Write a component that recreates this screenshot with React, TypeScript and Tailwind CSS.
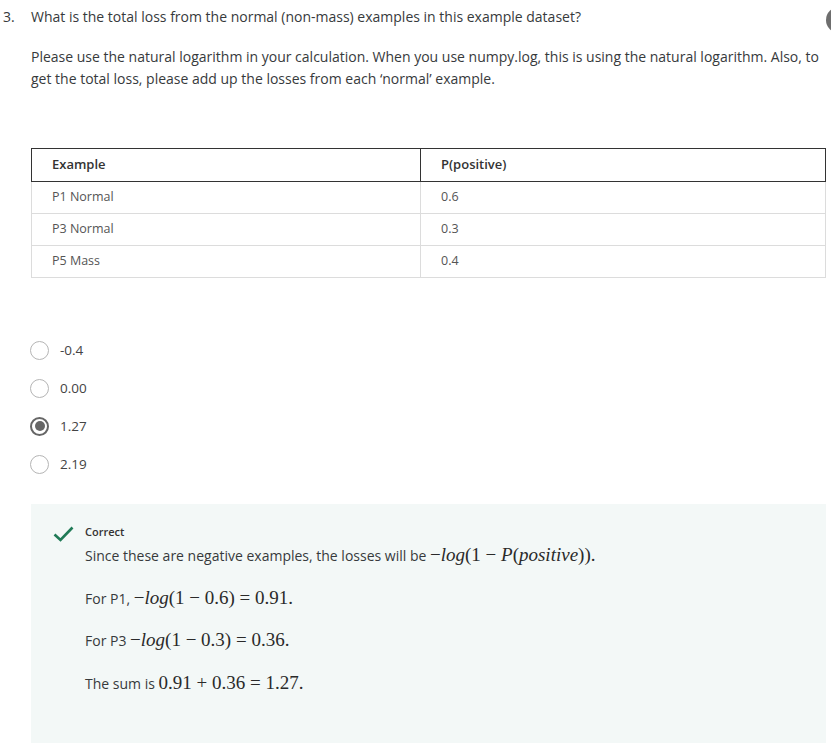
import React from "react";

const M = ({ children }: { children: React.ReactNode }) => (
  <span className="font-['Liberation_Serif',serif] text-[19px] leading-none text-[#2a2a2a]">{children}</span>
);
const I = ({ children }: { children: React.ReactNode }) => <i>{children}</i>;

export default function App() {
  const rows = [
    ["P1 Normal", "0.6"],
    ["P3 Normal", "0.3"],
    ["P5 Mass", "0.4"],
  ];
  const opts = ["-0.4", "0.00", "1.27", "2.19"];
  return (
    <div className="relative w-[831px] h-[743px] overflow-hidden bg-white font-['Open_Sans',sans-serif] text-[#373a3c]">
      <div className="absolute left-[826px] top-[7px] w-[26px] h-[26px] rounded-full bg-[#6e6e6e]" />
      <div className="flex pt-[6px]">
        <div className="w-[31px] pl-[3px] text-[14px] leading-[22px]">3.</div>
        <div className="w-[795px]">
          <p className="text-[14px] leading-[22px]">
            What is the total loss from the normal (non-mass) examples in this example dataset?
          </p>
          <p className="mt-[18px] text-[14px] leading-[22px]">
            Please use the natural logarithm in your calculation. When you use numpy.log, this is using the natural logarithm. Also, to get the total loss, please add up the losses from each ‘normal’ example.
          </p>
          <table className="mt-[58px] w-[795px] border-collapse text-[12.5px]">
            <thead>
              <tr className="h-[33px]">
                <th className="w-[389px] border border-[#333] pl-[20px] text-left font-semibold text-[13px] text-[#333]">Example</th>
                <th className="border border-[#333] pl-[20px] text-left font-semibold text-[13px] text-[#333]">P(positive)</th>
              </tr>
            </thead>
            <tbody>
              {rows.map((r) => (
                <tr key={r[0]} className="h-[32px] text-[#555]">
                  <td className="border border-[#dcdcdc] pl-[20px]">{r[0]}</td>
                  <td className="border border-[#dcdcdc] pl-[20px]">{r[1]}</td>
                </tr>
              ))}
            </tbody>
          </table>
          <div className="mt-[63px] flex flex-col gap-[20px] -ml-[1px]">
            {opts.map((o, i) => (
              <div key={o} className="flex items-center h-[18px]">
                {i === 2 ? (
                  <div className="w-[19px] h-[19px] rounded-full border-[2px] border-[#666] flex items-center justify-center">
                    <div className="w-[10px] h-[10px] rounded-full bg-[#666]" />
                  </div>
                ) : (
                  <div className="w-[19px] h-[19px] rounded-full border border-[#b5b5b5]" />
                )}
                <span className="ml-[11px] text-[13.5px] text-[#444]">{o}</span>
              </div>
            ))}
          </div>
        </div>
      </div>
      <div className="absolute left-[31px] top-[504px] w-[795px] h-[239px] bg-[#f3f8f7]">
        <div className="flex pt-[18px] pl-[22px]">
          <svg width="21" height="16" viewBox="0 0 21 16" className="mt-[4px]">
            <path d="M1.5 8.5 L7.5 14 L19.5 1.5" fill="none" stroke="#1f7a56" strokeWidth="2.6" />
          </svg>
          <div className="ml-[11px]">
            <div className="text-[11px] font-semibold text-[#333] leading-[20px]">Correct</div>
            <div className="text-[14px] leading-[30px] text-[#373a3c] -mt-[1px]">
              <div>
                Since these are negative examples, the losses will be{" "}
                <M>
                  −<I>log</I>(1 − <I>P</I>(<I>positive</I>)).
                </M>
              </div>
              <div className="mt-[12.5px]">
                For P1, <M>−<I>log</I>(1 − 0.6) = 0.91.</M>
              </div>
              <div className="mt-[12.5px]">
                For P3 <M>−<I>log</I>(1 − 0.3) = 0.36.</M>
              </div>
              <div className="mt-[12.5px]">
                The sum is <M>0.91 + 0.36 = 1.27.</M>
              </div>
            </div>
          </div>
        </div>
      </div>
    </div>
  );
}
